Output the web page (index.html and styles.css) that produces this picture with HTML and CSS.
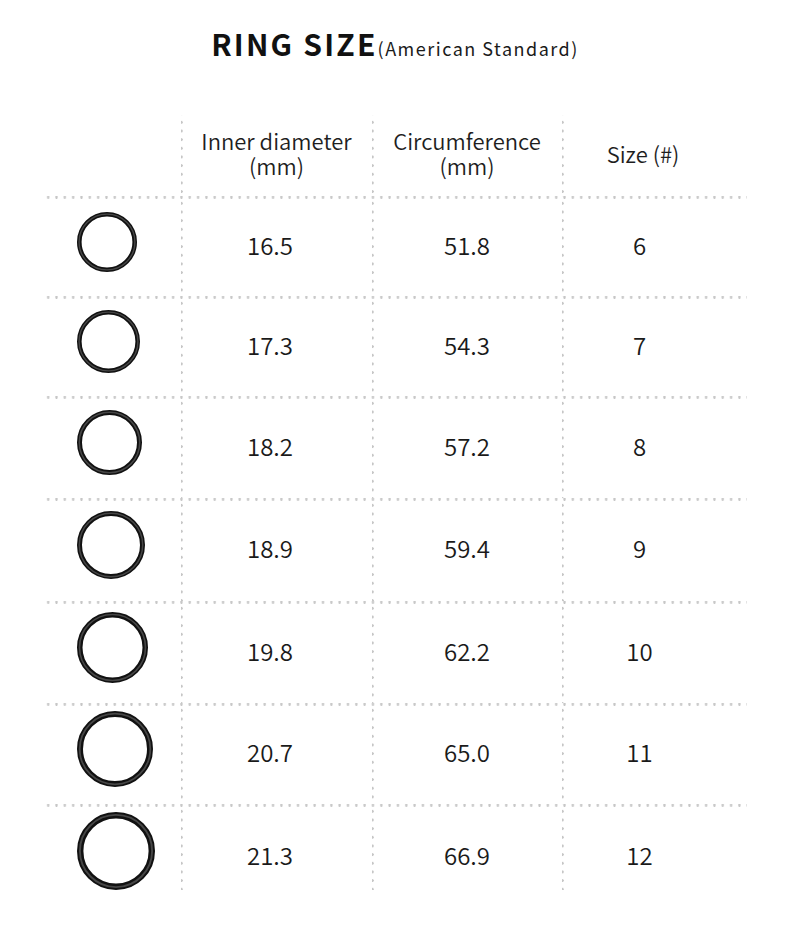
FILE: index.html
```html
<!DOCTYPE html>
<html lang="en">
<head>
<meta charset="utf-8">
<title>Ring Size</title>
<link rel="stylesheet" href="styles.css">
</head>
<body>
<div class="page">
  <h1 class="title"><span class="title-main">RING SIZE</span><span class="title-sub">(American Standard)</span></h1>

  <div class="table">
    <div class="row head">
      <div class="cell ring-cell"></div>
      <div class="cell col2 hd"><span>Inner diameter</span><span>(mm)</span></div>
      <div class="cell col3 hd"><span>Circumference</span><span>(mm)</span></div>
      <div class="cell col4 hd"><span>Size (#)</span></div>
    </div>

    <div class="row body r1">
      <div class="cell ring-cell"><svg width="60" height="60" viewBox="0 0 60 60"><circle cx="30" cy="30" r="27.7" class="ring-o" stroke-width="4.6"/><circle cx="30" cy="30" r="27.9" class="ring-i" stroke-width="1.4"/></svg></div>
      <div class="cell col2 val">16.5</div>
      <div class="cell col3 val">51.8</div>
      <div class="cell col4 val">6</div>
    </div>

    <div class="row body r2">
      <div class="cell ring-cell"><svg width="63" height="63" viewBox="0 0 63 63"><circle cx="31.5" cy="31.5" r="29.2" class="ring-o" stroke-width="4.6"/><circle cx="31.5" cy="31.5" r="29.4" class="ring-i" stroke-width="1.4"/></svg></div>
      <div class="cell col2 val">17.3</div>
      <div class="cell col3 val">54.3</div>
      <div class="cell col4 val">7</div>
    </div>

    <div class="row body r3">
      <div class="cell ring-cell"><svg width="65" height="65" viewBox="0 0 65 65"><circle cx="32.5" cy="32.5" r="30" class="ring-o" stroke-width="5"/><circle cx="32.5" cy="32.5" r="30.2" class="ring-i" stroke-width="1.5"/></svg></div>
      <div class="cell col2 val">18.2</div>
      <div class="cell col3 val">57.2</div>
      <div class="cell col4 val">8</div>
    </div>

    <div class="row body r4">
      <div class="cell ring-cell"><svg width="68" height="68" viewBox="0 0 68 68"><circle cx="34" cy="34" r="31.5" class="ring-o" stroke-width="5"/><circle cx="34" cy="34" r="31.7" class="ring-i" stroke-width="1.5"/></svg></div>
      <div class="cell col2 val">18.9</div>
      <div class="cell col3 val">59.4</div>
      <div class="cell col4 val">9</div>
    </div>

    <div class="row body r5">
      <div class="cell ring-cell"><svg width="71" height="71" viewBox="0 0 71 71"><circle cx="35.5" cy="35.5" r="32.75" class="ring-o" stroke-width="5.5"/><circle cx="35.5" cy="35.5" r="33" class="ring-i" stroke-width="1.6"/></svg></div>
      <div class="cell col2 val">19.8</div>
      <div class="cell col3 val">62.2</div>
      <div class="cell col4 val">10</div>
    </div>

    <div class="row body r6">
      <div class="cell ring-cell"><svg width="76" height="76" viewBox="0 0 76 76"><circle cx="38" cy="38" r="35" class="ring-o" stroke-width="6"/><circle cx="38" cy="38" r="35.3" class="ring-i" stroke-width="1.8"/></svg></div>
      <div class="cell col2 val">20.7</div>
      <div class="cell col3 val">65.0</div>
      <div class="cell col4 val">11</div>
    </div>

    <div class="row body r7">
      <div class="cell ring-cell"><svg width="78" height="78" viewBox="0 0 78 78"><circle cx="39" cy="39" r="35.8" class="ring-o" stroke-width="6.4"/><circle cx="39" cy="39" r="36.1" class="ring-i" stroke-width="1.9"/></svg></div>
      <div class="cell col2 val">21.3</div>
      <div class="cell col3 val">66.9</div>
      <div class="cell col4 val">12</div>
    </div>
  </div>
</div>
</body>
</html>
```

FILE: styles.css
```css
html, body {
  margin: 0;
  padding: 0;
  background: #ffffff;
}

body {
  font-family: "Noto Sans CJK JP", "Noto Sans", sans-serif;
  color: #1a1a1a;
}

.page {
  width: 790px;
  height: 936px;
  overflow: hidden;
}

.title {
  margin: 0;
  padding-top: 22px;
  height: 115px;
  box-sizing: border-box;
  text-align: center;
  font-weight: 400;
  line-height: 40px;
  white-space: nowrap;
}

.title-main {
  font-size: 30px;
  font-weight: 700;
  letter-spacing: 2.2px;
  color: #111111;
}

.title-sub {
  font-size: 18px;
  font-weight: 400;
  letter-spacing: 1.5px;
  color: #1a1a1a;
  margin-left: 0;
}

.table {
  margin-left: 45px;
  width: 702px;
  display: flex;
  flex-direction: column;
}

.row {
  display: grid;
  grid-template-columns: 136px 191px 190px 185px;
}

.head { height: 81px; }
.r1 { height: 100px; }
.r2 { height: 100px; }
.r3 { height: 102px; }
.r4 { height: 103px; }
.r5 { height: 102px; }
.r6 { height: 101px; }
.r7 { height: 86px; }

.body {
  background-image: radial-gradient(circle at center, #c6c6c6 0, #c6c6c6 1px, rgba(255,255,255,0) 1.6px);
  background-size: 8.33px 3px;
  background-repeat: repeat-x;
  background-position: -1px -0.5px;
}

.cell {
  display: flex;
  align-items: center;
  justify-content: center;
  box-sizing: border-box;
}

.col2, .col3, .col4 {
  background-image: radial-gradient(circle at center, #c6c6c6 0, #c6c6c6 1px, rgba(255,255,255,0) 1.6px);
  background-size: 3px 8.67px;
  background-repeat: repeat-y;
  background-position: -1px 3px;
}

.r7 .cell {
  padding-top: 18px;
}

.ring-cell {
  justify-content: flex-start;
  padding-left: 32px;
  padding-bottom: 9px;
}

.r7 .ring-cell {
  padding-bottom: 0;
  padding-top: 8px;
}

.ring-cell svg {
  display: block;
}

.ring-o {
  fill: none;
  stroke: #111111;
}

.ring-i {
  fill: none;
  stroke: #5c5c5c;
  opacity: 0.7;
}

.hd {
  flex-direction: column;
  text-align: center;
  font-size: 22px;
  line-height: 25px;
  font-weight: 350;
  color: #1e1e1e;
  padding-bottom: 6px;
}

.hd span {
  display: block;
  height: 25px;
  white-space: nowrap;
}

.hd.col4 {
  padding-right: 23px;
  padding-bottom: 4px;
}

.val {
  font-size: 24px;
  line-height: 30px;
  font-weight: 350;
  color: #1a1a1a;
  padding-bottom: 3px;
}

.val.col2 {
  padding-right: 13px;
}

.val.col4 {
  padding-right: 30px;
}
```
